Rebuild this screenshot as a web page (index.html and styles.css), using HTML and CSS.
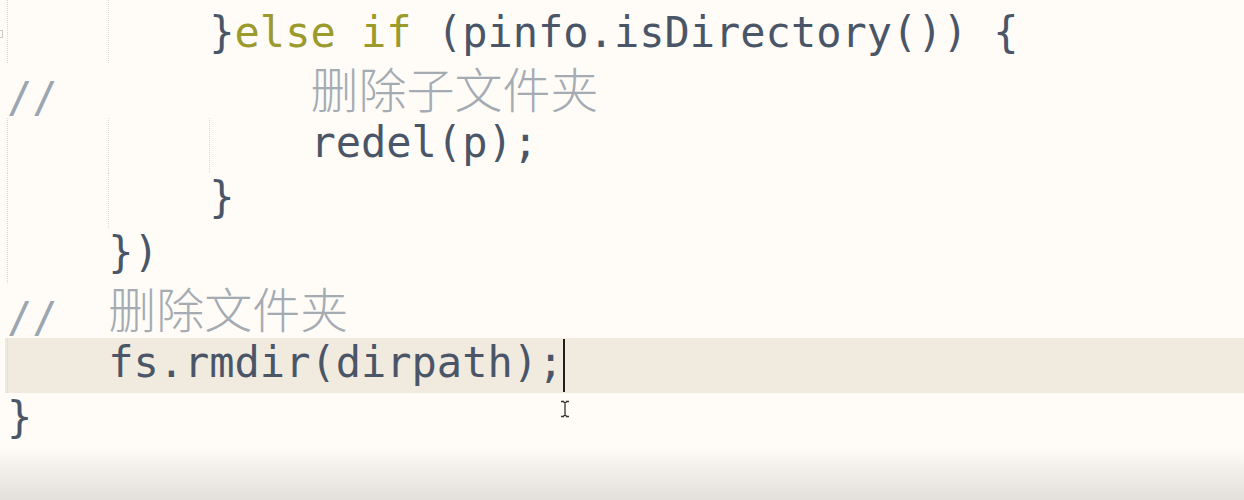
FILE: index.html
```html
<!DOCTYPE html>
<html lang="zh">
<head>
<meta charset="utf-8">
<title>editor</title>
<link rel="stylesheet" href="styles.css">
</head>
<body>
<div class="editor">
  <div class="line top"><span class="gutter"></span><span class="code"><span class="ind g"></span><span class="ind g"></span></span></div>
  <div class="line"><span class="gutter"><span class="fold"></span></span><span class="code"><span class="ind g"></span><span class="ind g"></span><span class="t">}<span class="kw">else if</span> (pinfo.isDirectory()) {</span></span></div>
  <div class="line"><span class="gutter"></span><span class="code"><span class="t"><span class="cm">//          </span><span class="cjk">删除子文件夹</span></span></span></div>
  <div class="line"><span class="gutter"></span><span class="code"><span class="ind g"></span><span class="ind g"></span><span class="ind g"></span><span class="t">redel(p);</span></span></div>
  <div class="line"><span class="gutter"></span><span class="code"><span class="ind g"></span><span class="ind g"></span><span class="t">}</span></span></div>
  <div class="line"><span class="gutter"></span><span class="code"><span class="ind g"></span><span class="t">})</span></span></div>
  <div class="line"><span class="gutter"></span><span class="code"><span class="t"><span class="cm">//  </span><span class="cjk">删除文件夹</span></span></span></div>
  <div class="line current"><span class="gutter"></span><span class="code hl"><span class="ind g"></span><span class="t">fs.rmdir(dirpath);</span><span class="caret"></span><svg class="ibeam" width="12" height="18" viewBox="0 0 12 18"><path d="M2 1.5h3.2M6.8 1.5H10M6 2v14M2 16.5h3.2M6.8 16.5H10M4.5 2L6 3l1.5-1M4.5 16L6 15l1.5 1" stroke="#333" stroke-width="1.3" fill="none"/></svg></span></div>
  <div class="line"><span class="gutter"></span><span class="code"><span class="t">}</span></span></div>
</div>
<div class="shade"></div>
</body>
</html>
```
FILE: styles.css
```css
html, body {
  margin: 0;
  padding: 0;
  background: #fffcf7;
  height: 500px;
  overflow: hidden;
}
.editor {
  font-family: "DejaVu Sans Mono", "Noto Sans CJK SC", monospace;
  font-size: 42px;
  color: #4a5668;
}
.line {
  display: flex;
  height: 55px;
  white-space: pre;
}
.line.top {
  height: 8px;
  overflow: hidden;
}
.gutter {
  width: 5px;
  flex: none;
  overflow: hidden;
  display: flex;
  align-items: flex-start;
}
.fold {
  display: block;
  width: 8px;
  height: 8px;
  margin: 22px 0 0 -5px;
  border: 1px solid #c9cbc6;
  box-sizing: border-box;
}
.code {
  flex: 1;
  padding-left: 2px;
  display: flex;
  align-items: flex-start;
  position: relative;
}
.code.hl {
  background: #f1eadf;
}
.t {
  display: block;
  height: 55px;
  line-height: 49px;
}
.ind {
  display: block;
  flex: none;
  width: 4ch;
  height: 55px;
  box-sizing: border-box;
}
.ind.g {
  border-left: 1px dotted #d9d9d4;
}
.kw {
  color: #9b9a2c;
}
.cm {
  color: #9ba6b2;
}
.cjk {
  font-family: "Noto Sans CJK SC", sans-serif;
  font-size: 48px;
  font-weight: 300;
  color: #a4abb3;
  vertical-align: 4px;
}
.caret {
  display: block;
  width: 2px;
  height: 53px;
  margin-top: 1px;
  background: #1e1e1e;
}
.ibeam {
  position: absolute;
  left: 554px;
  top: 62px;
}
.shade {
  height: 52px;
  background: linear-gradient(to bottom, #fffcf7 0%, #f4f1ec 35%, #e3e0db 100%);
}
```
